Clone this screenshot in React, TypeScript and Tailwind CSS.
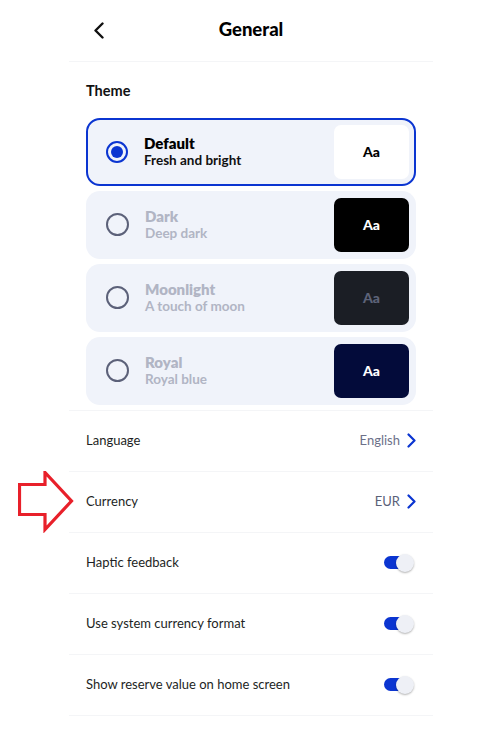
import React from 'react';

type Theme = {
  id: string;
  name: string;
  desc: string;
  preview: string;
  previewText: string;
};

const themes: Theme[] = [
  { id: 'default', name: 'Default', desc: 'Fresh and bright', preview: 'bg-white', previewText: 'text-black' },
  { id: 'dark', name: 'Dark', desc: 'Deep dark', preview: 'bg-black', previewText: 'text-white' },
  { id: 'moonlight', name: 'Moonlight', desc: 'A touch of moon', preview: 'bg-[#1b1e25]', previewText: 'text-[#5d6379]' },
  { id: 'royal', name: 'Royal', desc: 'Royal blue', preview: 'bg-[#030b3a]', previewText: 'text-white' },
];

const Chevron = () => (
  <svg width="9" height="15" viewBox="0 0 9 15" fill="none" className="ml-[7px]">
    <path d="M1.5 1.5L7.5 7.5L1.5 13.5" stroke="#0b35d1" strokeWidth="2.2" strokeLinecap="round" strokeLinejoin="round" />
  </svg>
);

const Toggle = () => (
  <div className="relative w-[30px] h-[18px] flex items-center mr-[2px]">
    <div className="w-[26px] h-[13px] rounded-full bg-[#0b35d1]" />
    <div className="absolute right-0 top-0 w-[18px] h-[18px] rounded-full bg-[#eef0f6] shadow-[0_1px_2px_rgba(0,0,0,0.3)]" />
  </div>
);

const ThemeCard: React.FC<{ theme: Theme; selected: boolean }> = ({ theme, selected }) => (
  <div
    className={`h-[68px] rounded-[14px] bg-[#f0f3fa] flex items-center pl-[20px] pr-[5px] ${
      selected ? 'border-2 border-[#0b35d1]' : 'border-2 border-transparent'
    }`}
  >
    {selected ? (
      <div className="w-[22px] h-[22px] rounded-full border-2 border-[#0b35d1] flex items-center justify-center shrink-0 -ml-[2px]">
        <div className="w-[12px] h-[12px] rounded-full bg-[#0b35d1]" />
      </div>
    ) : (
      <div className="w-[23px] h-[23px] rounded-full border-2 border-[#5c6179] shrink-0 -ml-[2px]" />
    )}
    <div className="flex-1 ml-[16px] leading-none">
      <div className={`text-[15px] font-extrabold ${selected ? 'text-black' : 'text-[#b1b5c4]'}`}>{theme.name}</div>
      <div className={`text-[13.5px] font-bold mt-[3px] ${selected ? 'text-[#111]' : 'text-[#b1b5c4]'}`}>{theme.desc}</div>
    </div>
    <div className={`w-[75px] h-[54px] rounded-[7px] flex items-center justify-center ${theme.preview}`}>
      <span className={`text-[14px] font-black ${theme.previewText}`}>Aa</span>
    </div>
  </div>
);

const Row: React.FC<{ label: string; children: React.ReactNode; arrow?: boolean }> = ({ label, children, arrow }) => (
  <div className="relative h-[61px] border-b border-[#f4f5f7] flex items-center justify-between pl-[17px] pr-[17px]">
    {arrow && (
      <svg className="absolute left-[-51px] top-[-1px]" width="56" height="62" viewBox="0 0 56 62">
        <path d="M1.5 13.5 H27 V1.5 L53.5 30 L27 58.5 V43.5 H1.5 Z" fill="none" stroke="#e8202a" strokeWidth="3.2" strokeLinejoin="miter" />
      </svg>
    )}
    <span className="text-[13px] text-[#1d1f24]">{label}</span>
    <div className="flex items-center">{children}</div>
  </div>
);

export default function App() {
  return (
    <div className="w-full min-h-[731px] bg-white" style={{ fontFamily: 'Lato, "Open Sans", sans-serif' }}>
      <div className="mx-auto w-[364px]">
        <div className="relative h-[62px] border-b border-[#f4f5f7] flex items-center justify-center">
          <svg className="absolute left-[24px] top-[22px]" width="12" height="17" viewBox="0 0 12 17" fill="none">
            <path d="M9.5 1.5L2.5 8.5L9.5 15.5" stroke="#111" strokeWidth="2.4" strokeLinecap="round" strokeLinejoin="round" />
          </svg>
          <span className="text-[18.5px] font-black text-black -mt-[2px]">General</span>
        </div>
        <div className="px-[17px] pt-[18px] pb-[5px] border-b border-[#f4f5f7]">
          <div className="text-[14.5px] font-bold text-[#111] mb-[16px]">Theme</div>
          <div className="flex flex-col gap-[5px]">
            {themes.map((t) => (
              <ThemeCard key={t.id} theme={t} selected={t.id === 'default'} />
            ))}
          </div>
        </div>
        <Row label="Language">
          <span className="text-[13px] text-[#6c7089]">English</span>
          <Chevron />
        </Row>
        <Row label="Currency" arrow>
          <span className="text-[13px] text-[#5a5f78]">EUR</span>
          <Chevron />
        </Row>
        <Row label="Haptic feedback">
          <Toggle />
        </Row>
        <Row label="Use system currency format">
          <Toggle />
        </Row>
        <Row label="Show reserve value on home screen">
          <Toggle />
        </Row>
      </div>
    </div>
  );
}
